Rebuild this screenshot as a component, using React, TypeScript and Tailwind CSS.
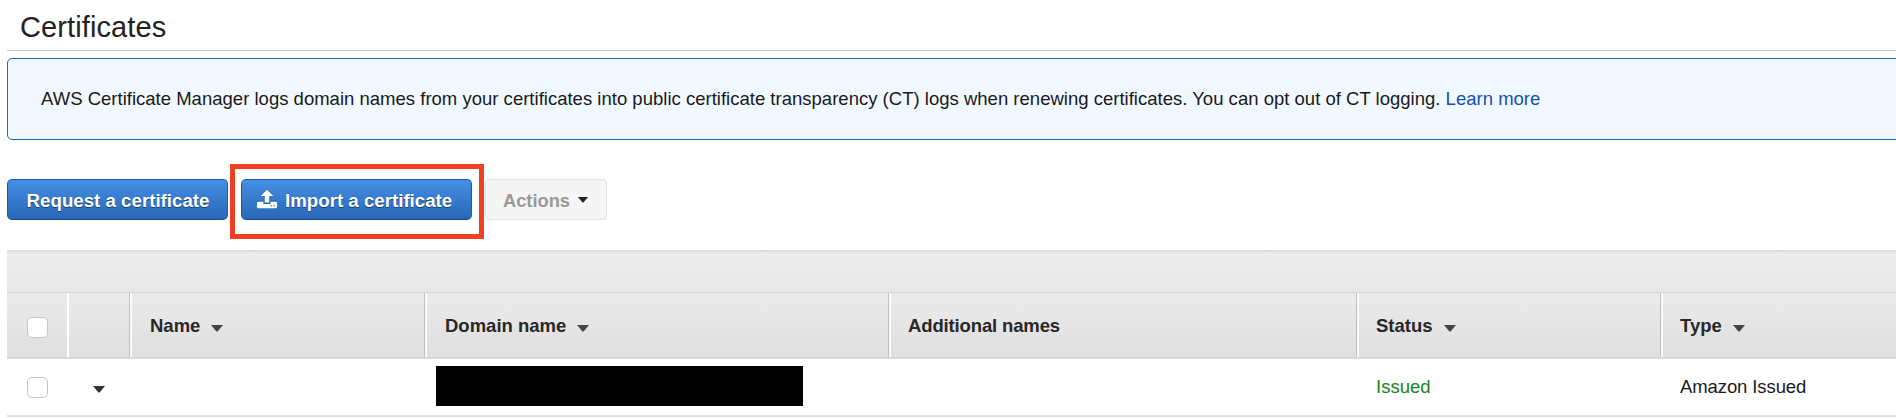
import React from "react";

function Caret({ className = "h-[7px] w-3" }: { className?: string }) {
  return (
    <svg className={`shrink-0 ${className}`} viewBox="0 0 12 7" aria-hidden="true">
      <path d="M0 0H12L6.8 6.2Q6 7 5.2 6.2Z" fill="currentColor" />
    </svg>
  );
}

function UploadIcon() {
  return (
    <svg className="mb-[5px] h-5 w-5 shrink-0 drop-shadow-[0_-1px_0_rgba(20,60,120,0.4)]" viewBox="0 0 20 20" aria-hidden="true">
      <path
        d="M10 0.5L16.3 7H12.2V13.6H7.8V7H3.7Z M1.2 12.8H6.4V15H13.6V12.8H18.8Q20 12.8 20 14V18Q20 19.2 18.8 19.2H1.2Q0 19.2 0 18V14Q0 12.8 1.2 12.8Z"
        fill="#fff"
      />
      <path d="M13.6 16.2h1.2v1.2h-1.2zM16.6 16.2h1.2v1.2h-1.2z" fill="#2f6fc2" />
    </svg>
  );
}

function Checkbox() {
  return (
    <button
      type="button"
      role="checkbox"
      aria-checked="false"
      className="block h-[21px] w-[21px] rounded-[5px] border border-[#c4c4c4] bg-white"
    />
  );
}

const primary =
  "flex h-[41px] items-center rounded-[5px] border border-[#1c5bab] border-b-[#154a91] bg-linear-to-b from-[#4490e6] to-[#2a66b6] pt-[3px] text-[18.7px] font-bold text-white [text-shadow:0_1px_1px_#173c70]";

const columns = [
  { label: "Name", width: "w-[295px]", pad: "pl-[18px]", sort: true, tracking: "" },
  { label: "Domain name", width: "w-[464px]", pad: "pl-[18px]", sort: true, tracking: "" },
  { label: "Additional names", width: "w-[468px]", pad: "pl-[17px]", sort: false, tracking: "tracking-[-0.14px]" },
  { label: "Status", width: "w-[304px]", pad: "pl-[17px]", sort: true, tracking: "" },
  { label: "Type", width: "w-[236px]", pad: "pl-[17px]", sort: true, tracking: "" },
];

export default function App() {
  return (
    <div className="h-[418px] w-[1896px] overflow-hidden bg-white pl-[7px] font-['Liberation_Sans',Arial,sans-serif] text-[18.5px] text-[#1a1a1a]">
      <h1 className="h-[51px] border-b border-[#c6c6c6] pt-[7px] pl-[13px] text-[29px] leading-[40px] tracking-[0.1px] text-[#222]">
        Certificates
      </h1>

      <div className="mt-[7px] flex h-[82px] w-[1920px] items-center rounded-[5px] border border-[#2469b8] bg-[#f1f8ff] pl-[33px]">
        <p className="tracking-[0.012px] whitespace-nowrap">
          AWS Certificate Manager logs domain names from your certificates into public certificate transparency (CT) logs when
          renewing certificates. You can opt out of CT logging.{" "}
          <a className="text-[#1450b0]">Learn more</a>
        </p>
      </div>

      <div className="mt-6 flex h-[75px] items-start">
        <button type="button" className={`${primary} mt-[15px] w-[221px] justify-center pl-[1px]`}>
          Request a certificate
        </button>
        <div className="ml-[2px] flex h-[75px] w-[254px] items-start border-[5px] border-[#f04023] pt-[10px] pl-[6px]">
          <button type="button" className={`${primary} w-[231px] gap-2 pl-[15px]`}>
            <UploadIcon />
            <span className="whitespace-nowrap">Import a certificate</span>
          </button>
        </div>
        <button
          type="button"
          className="mt-[15px] ml-px flex h-[41px] w-[122px] items-center rounded-[4px] border border-[#e2e2e2] bg-[#f5f5f5] pt-[2px] pl-[17px] text-[18.3px] font-bold text-[#999]"
        >
          Actions
          <Caret className="mb-px ml-2 h-[6px] w-[10px] text-[#222]" />
        </button>
      </div>

      <div className="mt-[11px]">
        <div className="h-[43px] border-t-2 border-b border-t-[#dfdfdf] border-b-[#d5d5d5] bg-linear-to-b from-[#ececec] to-[#e8e8e8]" />
        <div className="flex h-[66px] border-b-2 border-[#d9d9d9] bg-linear-to-b from-[#ebebeb] to-[#dfdfdf] font-bold text-[#282828]">
          <div className="flex w-[60px] items-center pt-1 pl-5">
            <Checkbox />
          </div>
          <div className="w-[62px] border-l-2 border-white" />
          {columns.map((c) => (
            <div key={c.label} className={`flex ${c.width} border-l border-[#bebebe]`}>
              <div className={`flex flex-1 items-center border-l-2 border-[#fafafa] pt-[2px] ${c.pad}`}>
                <span className={`whitespace-nowrap ${c.tracking}`}>{c.label}</span>
                {c.sort && <Caret className="mt-[4px] ml-[11px] h-[7px] w-3 text-[#444]" />}
              </div>
            </div>
          ))}
        </div>
        <div className="flex h-[58px] items-center border-b-2 border-[#e0e0e0]">
          <div className="w-[60px] pt-px pl-5">
            <Checkbox />
          </div>
          <div className="w-[62px] pt-[4px] pl-[26px]">
            <Caret className="h-[7px] w-3 text-[#333]" />
          </div>
          <div className="w-[295px]" />
          <div className="w-[464px] pl-3">
            <div className="mb-[3px] h-10 w-[367px] bg-black" />
          </div>
          <div className="w-[468px]" />
          <div className="w-[304px] pb-px pl-5 text-[#168516]">Issued</div>
          <div className="w-[236px] pb-px pl-5 tracking-[-0.1px]">Amazon Issued</div>
        </div>
      </div>
    </div>
  );
}
